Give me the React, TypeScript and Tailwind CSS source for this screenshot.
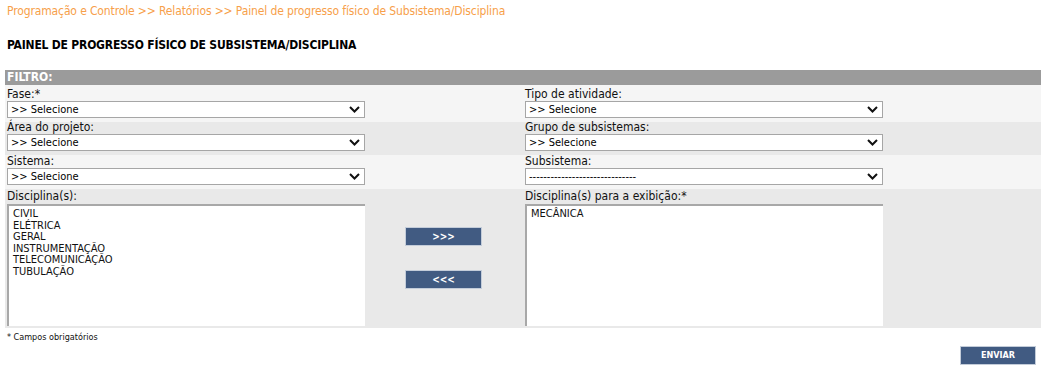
import React from "react";

const font = { fontFamily: '"DejaVu Sans Condensed", "DejaVu Sans", sans-serif' };

function Chevron() {
  return (
    <svg width="11" height="7" viewBox="0 0 11 7" className="shrink-0">
      <path d="M1 1 L5.5 5.5 L10 1" fill="none" stroke="#111" strokeWidth="2" />
    </svg>
  );
}

function FakeSelect({ value }: { value: string }) {
  return (
    <div className="flex h-[17px] w-[358px] items-center justify-between border border-[#a6a6a6] bg-white pl-[3px] pr-[4px] text-[11px] leading-none text-black">
      <span>{value}</span>
      <Chevron />
    </div>
  );
}

function Field({ label, value }: { label: string; value: string }) {
  return (
    <div className="flex flex-col">
      <span className="h-[13px] text-[12px] leading-[13px] text-[#111]">{label}</span>
      <FakeSelect value={value} />
    </div>
  );
}

function ListBox({ items }: { items: string[] }) {
  return (
    <div className="h-[122px] w-[358px] border-t-2 border-l-2 border-t-[#a8a8a8] border-l-[#a8a8a8] bg-white pl-[4px] pt-[2px] text-[11px] leading-[11.5px] text-[#111]">
      {items.map((i) => (
        <div key={i}>{i}</div>
      ))}
    </div>
  );
}

function Arrow({ label }: { label: string }) {
  return (
    <button className="h-[19px] w-[77px] border border-[#c3ccd9] bg-[#415b82] text-[10px] font-bold leading-none text-white">
      {label}
    </button>
  );
}

export default function App() {
  return (
    <div className="h-[375px] w-[1050px] bg-white" style={font}>
      {/* Breadcrumb */}
      <div className="pl-[7px] pt-[4px] text-[12px] leading-[14px] tracking-[-0.13px] text-[#f7a04a]">
        Programação e Controle &gt;&gt; Relatórios &gt;&gt; Painel de progresso físico de Subsistema/Disciplina
      </div>

      <h1 className="pl-[7px] pt-[20px] text-[12px] font-bold leading-[14px] tracking-[-0.2px] text-black">
        PAINEL DE PROGRESSO FÍSICO DE SUBSISTEMA/DISCIPLINA
      </h1>

      {/* Filter table */}
      <div className="ml-[5px] mt-[18px] w-[1036px]">
        <div className="h-[15px] bg-[#9b9b9b] pl-[2px] text-[12px] font-bold leading-[15px] text-white">FILTRO:</div>

        <div className="flex h-[37px] items-end bg-[#f5f5f5] pb-[4px] pl-[2px]">
          <div className="w-[518px]">
            <Field label="Fase:*" value=">> Selecione" />
          </div>
          <Field label="Tipo de atividade:" value=">> Selecione" />
        </div>

        <div className="flex h-[33px] items-end bg-[#e9e9e9] pb-[4px] pl-[2px]">
          <div className="w-[518px]">
            <Field label="Área do projeto:" value=">> Selecione" />
          </div>
          <Field label="Grupo de subsistemas:" value=">> Selecione" />
        </div>

        <div className="flex h-[34px] items-end bg-[#f5f5f5] pb-[4px] pl-[2px]">
          <div className="w-[518px]">
            <Field label="Sistema:" value=">> Selecione" />
          </div>
          <Field label="Subsistema:" value="------------------------------" />
        </div>

        <div className="flex h-[139px] bg-[#e9e9e9] pl-[2px] pt-[1px]">
          <div className="flex flex-col">
            <span className="h-[14px] text-[12px] leading-[13px] text-[#111]">Disciplina(s):</span>
            <ListBox items={["CIVIL", "ELÉTRICA", "GERAL", "INSTRUMENTAÇÃO", "TELECOMUNICAÇÃO", "TUBULAÇÃO"]} />
          </div>
          <div className="flex w-[160px] flex-col items-start gap-[24px] pl-[40px] pt-[37px]">
            <Arrow label=">>>" />
            <Arrow label="<<<" />
          </div>
          <div className="flex flex-col">
            <span className="h-[14px] text-[12px] leading-[13px] text-[#111]">Disciplina(s) para a exibição:*</span>
            <ListBox items={["MECÂNICA"]} />
          </div>
        </div>
      </div>

      <div className="pl-[7px] pt-[4px] text-[9px] leading-[10px] text-[#111]">* Campos obrigatórios</div>

      <div className="flex justify-end pr-[14px] pt-[4px]">
        <button className="h-[19px] w-[76px] border border-[#c3ccd9] bg-[#415b82] text-[9px] font-bold leading-none text-white">
          ENVIAR
        </button>
      </div>
    </div>
  );
}
